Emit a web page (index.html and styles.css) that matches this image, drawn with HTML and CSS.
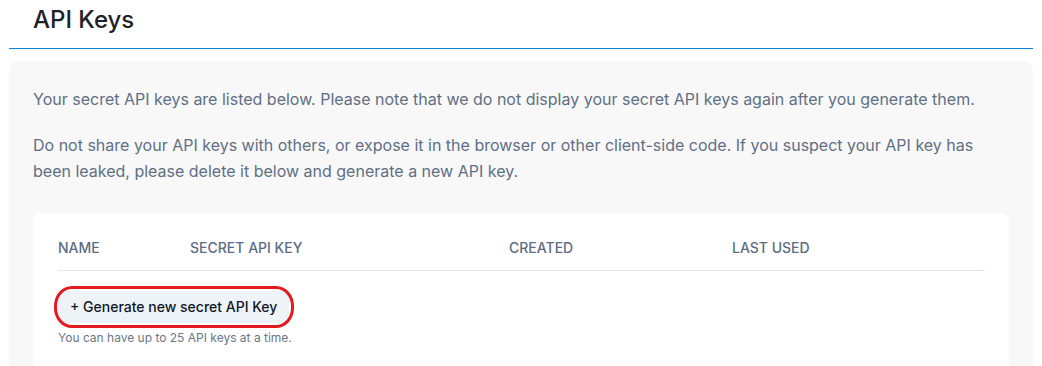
FILE: index.html
```html
<!DOCTYPE html>
<html lang="en">
<head>
<meta charset="utf-8">
<title>API Keys</title>
<link rel="stylesheet" href="styles.css">
</head>
<body>
<div class="page">
  <header class="page-header">
    <h1 class="title">API Keys</h1>
  </header>
  <section class="panel">
    <p class="intro">Your secret API keys are listed below. Please note that we do not display your secret API keys again after you generate them.</p>
    <p class="intro intro-second">Do not share your API keys with others, or expose it in the browser or other client-side code. If you suspect your API key has been leaked, please delete it below and generate a new API key.</p>
    <div class="card">
      <div class="table-head">
        <div class="th">NAME</div>
        <div class="th">SECRET API KEY</div>
        <div class="th">CREATED</div>
        <div class="th">LAST USED</div>
      </div>
      <div class="actions">
        <div class="btn-wrap">
          <button class="btn-generate" type="button">+ Generate new secret API Key</button>
          <span class="annotation"></span>
        </div>
        <p class="hint">You can have up to 25 API keys at a time.</p>
      </div>
    </div>
  </section>
</div>
</body>
</html>
```

FILE: styles.css
```css
* { box-sizing: border-box; }

html, body {
  margin: 0;
  padding: 0;
  background: #ffffff;
  font-family: Inter, "Noto Sans", "Liberation Sans", sans-serif;
}

.page {
  padding: 0 9px;
  height: 366px;
  overflow: hidden;
}

.page-header {
  height: 49px;
  border-bottom: 1px solid #0a84d9;
  padding-left: 24px;
}

.title {
  margin: 0;
  padding-top: 3px;
  font-size: 24px;
  line-height: 34px;
  font-weight: 500;
  color: #1f2328;
}

.panel {
  margin-top: 12px;
  background: #f8f8f8;
  border-radius: 10px;
  padding: 25px 24px 0 24px;
  min-height: 320px;
}

.intro {
  margin: 0;
  font-size: 16px;
  line-height: 26px;
  color: #5f6f84;
}

.intro-second {
  margin-top: 20px;
}

.card {
  margin-top: 29px;
  background: #ffffff;
  border-radius: 8px;
  padding: 13px 24px 0 25px;
  min-height: 200px;
}

.table-head {
  display: grid;
  grid-template-columns: 132px 319px 223px 1fr;
  border-bottom: 1px solid #dfe6ee;
}

.th {
  padding: 12px 0;
  font-size: 14px;
  line-height: 20px;
  font-weight: 500;
  color: #5c6c82;
}

.actions {
  padding-top: 20px;
}

.btn-wrap {
  position: relative;
  display: inline-block;
}

.btn-generate {
  display: block;
  border: none;
  background: #eef3f8;
  border-radius: 6px;
  padding: 6px 12px;
  font-family: inherit;
  font-size: 14px;
  line-height: 20px;
  font-weight: 500;
  color: #111827;
  white-space: nowrap;
  text-align: left;
}

.annotation {
  position: absolute;
  left: -4px;
  top: -5px;
  right: -5px;
  bottom: -5px;
  border: 3.5px solid #e4181f;
  border-radius: 18px / 20px;
  pointer-events: none;
}

.hint {
  margin: 7px 0 0 0;
  font-size: 12px;
  line-height: 16px;
  color: #6b7686;
}
```
